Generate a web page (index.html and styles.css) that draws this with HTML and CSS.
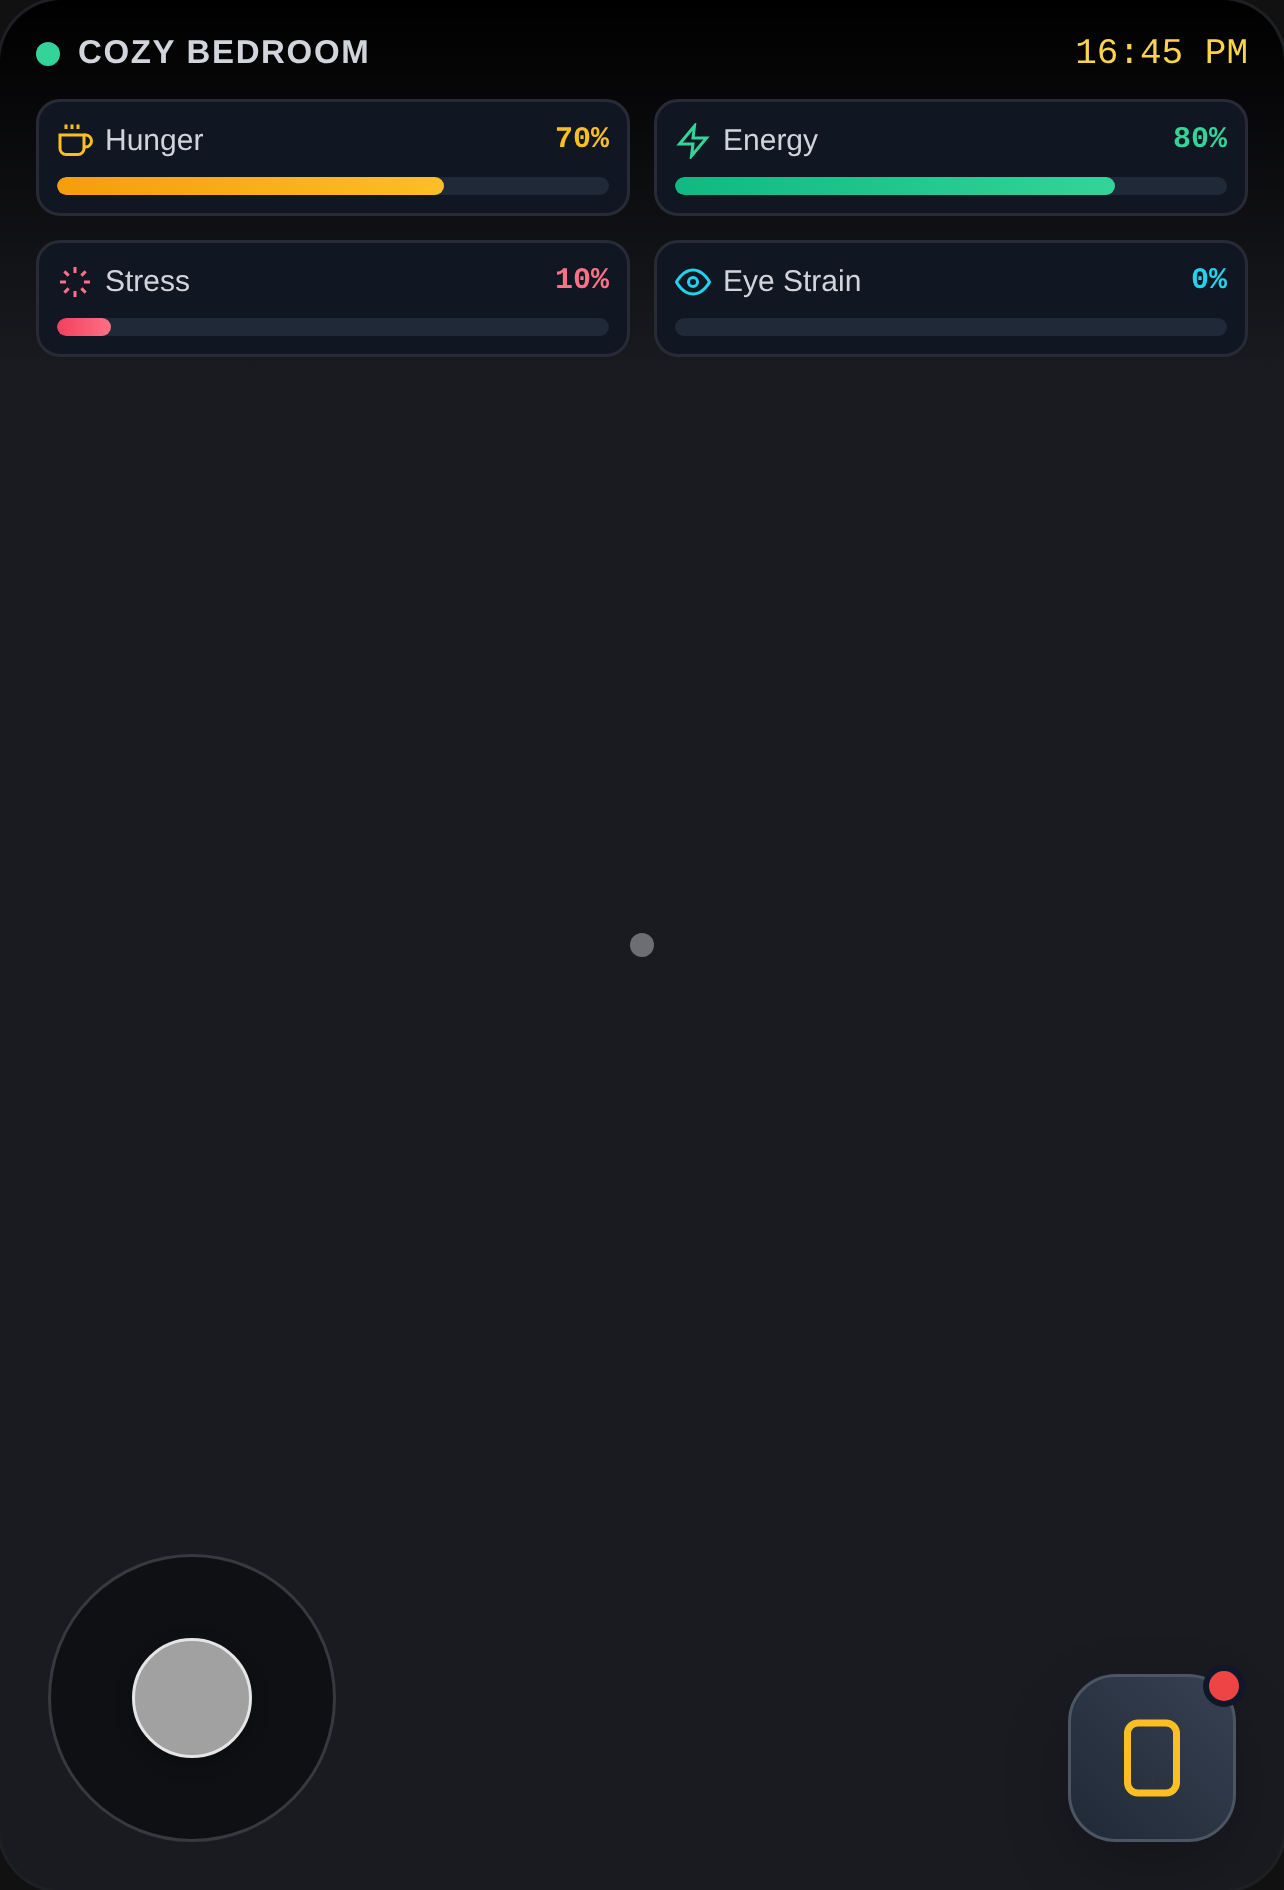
FILE: index.html
```html
<!DOCTYPE html>
<html lang="en">
<head>
<meta charset="utf-8">
<title>Cozy Bedroom</title>
<link rel="stylesheet" href="styles.css">
</head>
<body>
<main class="phone">
  <section class="hud">
    <header class="topbar">
      <div class="room">
        <span class="room-dot"></span>
        <h1 class="room-name">COZY BEDROOM</h1>
      </div>
      <time class="clock">16:45 PM</time>
    </header>
    <div class="stats">
      <article class="stat">
        <div class="stat-head">
          <div class="stat-label">
            <svg class="icon amber-stroke" viewBox="0 0 24 24"><path d="M18 8h1a4 4 0 0 1 0 8h-1"/><path d="M2 8h16v9a4 4 0 0 1-4 4H6a4 4 0 0 1-4-4V8z"/><line x1="6" y1="1" x2="6" y2="4"/><line x1="10" y1="1" x2="10" y2="4"/><line x1="14" y1="1" x2="14" y2="4"/></svg>
            <span>Hunger</span>
          </div>
          <span class="stat-value amber">70%</span>
        </div>
        <div class="track"><div class="fill fill-amber" style="width:70.1%"></div></div>
      </article>
      <article class="stat">
        <div class="stat-head">
          <div class="stat-label">
            <svg class="icon green-stroke" viewBox="0 0 24 24"><polygon points="13 2 3 14 12 14 11 22 21 10 12 10 13 2"/></svg>
            <span>Energy</span>
          </div>
          <span class="stat-value green">80%</span>
        </div>
        <div class="track"><div class="fill fill-green" style="width:79.8%"></div></div>
      </article>
      <article class="stat">
        <div class="stat-head">
          <div class="stat-label">
            <svg class="icon rose-stroke" viewBox="0 0 24 24"><line x1="12" y1="2" x2="12" y2="6"/><line x1="12" y1="18" x2="12" y2="22"/><line x1="4.93" y1="4.93" x2="7.76" y2="7.76"/><line x1="16.24" y1="16.24" x2="19.07" y2="19.07"/><line x1="2" y1="12" x2="6" y2="12"/><line x1="18" y1="12" x2="22" y2="12"/><line x1="4.93" y1="19.07" x2="7.76" y2="16.24"/><line x1="16.24" y1="7.76" x2="19.07" y2="4.93"/></svg>
            <span>Stress</span>
          </div>
          <span class="stat-value rose">10%</span>
        </div>
        <div class="track"><div class="fill fill-rose" style="width:9.7%"></div></div>
      </article>
      <article class="stat">
        <div class="stat-head">
          <div class="stat-label">
            <svg class="icon cyan-stroke" viewBox="0 0 24 24"><path d="M1 12s4-8 11-8 11 8 11 8-4 8-11 8-11-8-11-8z"/><circle cx="12" cy="12" r="3"/></svg>
            <span>Eye Strain</span>
          </div>
          <span class="stat-value cyan">0%</span>
        </div>
        <div class="track"></div>
      </article>
    </div>
  </section>

  <span class="reticle"></span>

  <section class="controls">
    <div class="joystick"><div class="knob"></div></div>
    <button class="action" type="button" aria-label="Phone">
      <svg class="action-icon" viewBox="0 0 24 24"><rect x="5" y="2" width="14" height="20" rx="3" ry="3"/><line x1="12" y1="18" x2="12.01" y2="18"/></svg>
      <span class="badge"></span>
    </button>
  </section>
</main>
</body>
</html>
```

FILE: styles.css
```css
* {
  box-sizing: border-box;
}

html,
body {
  margin: 0;
  padding: 0;
  background: #111112;
}

body {
  overflow: hidden;
  height: 1890px;
  text-rendering: geometricPrecision;
}

.phone {
  position: relative;
  width: 1284px;
  height: 1890px;
  display: flex;
  flex-direction: column;
  justify-content: space-between;
  border-radius: 62px;
  box-shadow: 0 0 0 3px #1f2023;
  overflow: hidden;
  background: linear-gradient(to bottom, #000 0, rgba(0, 0, 0, 0) 378px), #1a1b20;
  font-family: "Liberation Sans", Arial, sans-serif;
}

.hud {
  padding: 30px 36px 0;
  will-change: transform;
}

.topbar {
  display: flex;
  justify-content: space-between;
  align-items: center;
  height: 48px;
  margin-bottom: 21px;
}

.room {
  display: flex;
  align-items: center;
  gap: 18px;
}

.room-dot {
  width: 24px;
  height: 24px;
  border-radius: 50%;
  background: #34d399;
}

.room-name {
  margin: 0 0 4px;
  font-size: 33px;
  font-weight: 700;
  letter-spacing: 1.65px;
  line-height: 44px;
  color: #d1d5db;
}

.clock {
  font-family: "Liberation Mono", "Courier New", monospace;
  font-size: 36px;
  line-height: 48px;
  color: #fcd34d;
}

.stats {
  display: grid;
  grid-template-columns: 1fr 1fr;
  gap: 24px;
}

.stat {
  height: 117px;
  padding: 18px;
  border: 3px solid #272b36;
  border-radius: 24px;
  background: #111722;
}

.stat-head {
  display: flex;
  justify-content: space-between;
  align-items: flex-start;
  height: 42px;
  margin-bottom: 15px;
}

.stat-label {
  display: flex;
  align-items: center;
  gap: 12px;
  font-size: 30px;
  line-height: 42px;
  color: #d1d5db;
}

.icon {
  width: 36px;
  height: 36px;
  fill: none;
  stroke-width: 2;
}

.amber-stroke { stroke: #fbbf24; }
.green-stroke { stroke: #34d399; }
.rose-stroke { stroke: #fb7185; }
.cyan-stroke { stroke: #22d3ee; }

.stat-value {
  font-family: "Liberation Mono", "Courier New", monospace;
  font-size: 30px;
  font-weight: 700;
  line-height: 40px;
}

.amber { color: #fbbf24; }
.green { color: #34d399; }
.rose { color: #fb7185; }
.cyan { color: #22d3ee; }

.track {
  height: 18px;
  border-radius: 9px;
  background: #1f2937;
  overflow: hidden;
}

.fill {
  height: 100%;
  border-radius: 9px;
}

.fill-amber { background: linear-gradient(to right, #f59e0b, #fbbf24); }
.fill-green { background: linear-gradient(to right, #10b981, #34d399); }
.fill-rose { background: linear-gradient(to right, #f43f5e, #fb7185); }

.reticle {
  position: absolute;
  left: 50%;
  top: 50%;
  width: 24px;
  height: 24px;
  margin: -12px 0 0 -12px;
  border-radius: 50%;
  background: #6d6e71;
}

.controls {
  display: flex;
  justify-content: space-between;
  align-items: flex-end;
  padding: 0 48px 48px;
}

.joystick {
  display: flex;
  align-items: center;
  justify-content: center;
  width: 288px;
  height: 288px;
  border: 3px solid #38393c;
  border-radius: 50%;
  background: #0f1014;
}

.knob {
  width: 120px;
  height: 120px;
  border: 3px solid #e5e5e5;
  border-radius: 50%;
  background: #a1a1a1;
  box-shadow: 0 6px 18px rgba(0, 0, 0, 0.25);
}

.action {
  position: relative;
  display: flex;
  align-items: center;
  justify-content: center;
  width: 168px;
  height: 168px;
  padding: 0;
  border: 3px solid #4b5563;
  border-radius: 48px;
  background: linear-gradient(to top right, #1f2937, #374151);
  box-shadow: 0 25px 75px -12px rgba(0, 0, 0, 0.3);
}

.action-icon {
  width: 84px;
  height: 84px;
  fill: none;
  stroke: #fbbf24;
  stroke-width: 2;
}

.badge {
  position: absolute;
  top: -12px;
  right: -12px;
  width: 42px;
  height: 42px;
  border: 6px solid #0f172a;
  border-radius: 50%;
  background: #ef4444;
}
```
